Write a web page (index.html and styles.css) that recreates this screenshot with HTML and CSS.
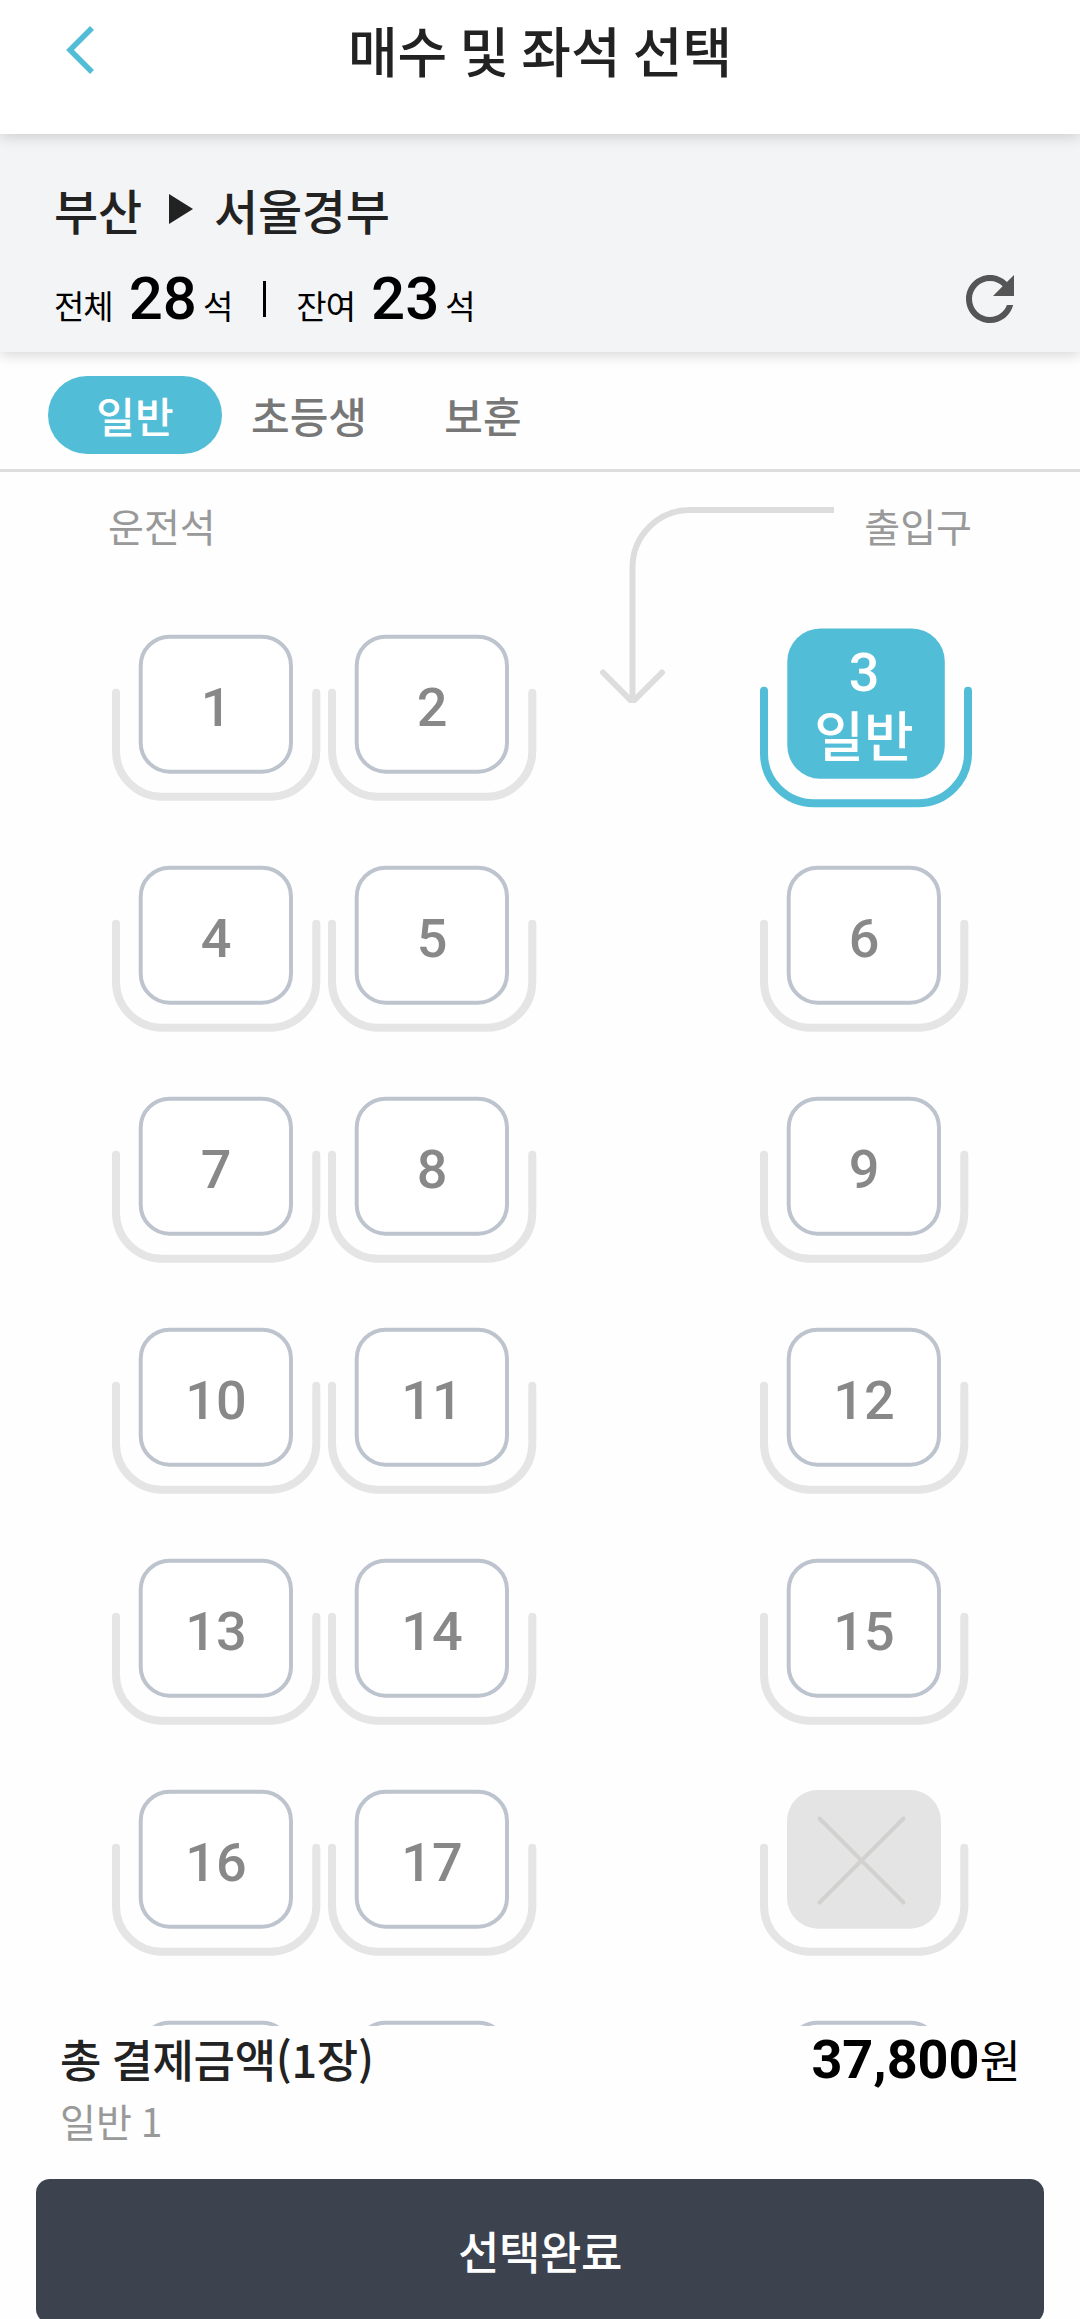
FILE: index.html
```html
<!DOCTYPE html>
<html lang="ko">
<head>
<meta charset="utf-8">
<title>매수 및 좌석 선택</title>
<link rel="stylesheet" href="styles.css">
</head>
<body>
<svg class="defs" aria-hidden="true">
  <symbol id="open" viewBox="0 0 216 231">
    <path d="M8 84.700V142.700a46 46 0 0 0 46 46H162.300a46 46 0 0 0 46-46V84.700" fill="none" stroke="#e5e5e5" stroke-width="8" stroke-linecap="round"/>
    <rect x="32.700" y="28.700" width="150.300" height="135" rx="29" fill="#fff" stroke="#bdc4ce" stroke-width="4"/>
  </symbol>
  <symbol id="taken" viewBox="0 0 216 231">
    <path d="M8 84.700V142.700a46 46 0 0 0 46 46H162.300a46 46 0 0 0 46-46V84.700" fill="none" stroke="#e5e5e5" stroke-width="8" stroke-linecap="round"/>
    <rect x="31" y="27" width="154" height="138.700" rx="31" fill="#e4e4e4"/>
    <path d="M63.500 55.500L147.500 139.500M147.500 55.500L63.500 139.500" fill="none" stroke="#d2d1d0" stroke-width="4" stroke-linecap="round"/>
  </symbol>
  <symbol id="picked" viewBox="0 0 216 231">
    <path d="M8 82.700V145.300a50 50 0 0 0 50 50H162a50 50 0 0 0 50-50V82.700" fill="none" stroke="#52bdd6" stroke-width="8" stroke-linecap="round"/>
    <rect x="31.300" y="20.500" width="157.500" height="150.200" rx="33" fill="#52bdd6"/>
  </symbol>
</svg>

<div class="screen">
  <header class="topbar">
    <svg class="back" width="28" height="48" viewBox="0 0 28 48"><path d="M26 2L4 24L26 46" fill="none" stroke="#52bdd6" stroke-width="5.500"/></svg>
    <h1 class="title">매수 및 좌석 선택</h1>
  </header>

  <section class="trip">
    <div class="route">
      <span>부산</span>
      <svg class="play" width="24" height="30" viewBox="0 0 24 30"><path d="M0 0L24 15L0 30Z" fill="#222"/></svg>
      <span>서울경부</span>
    </div>
    <div class="counts">
      <span class="unit">전체</span><b class="count">28</b><span class="unit">석</span>
      <i class="bar"></i>
      <span class="unit">잔여</span><b class="count">23</b><span class="unit">석</span>
      <svg class="refresh" width="72" height="72" viewBox="0 0 24 24"><path fill="#555" d="M17.650 6.350C16.200 4.900 14.210 4 12 4c-4.420 0-7.990 3.580-7.990 8s3.570 8 7.990 8c3.730 0 6.840-2.550 7.730-6h-2.080c-.820 2.330-3.040 4-5.650 4-3.310 0-6-2.690-6-6s2.690-6 6-6c1.660 0 3.140.690 4.220 1.780L13 11h7V4l-2.350 2.350z"/></svg>
    </div>
  </section>

  <nav class="tabs">
    <span class="tab active">일반</span>
    <span class="tab">초등생</span>
    <span class="tab">보훈</span>
  </nav>

  <main class="cabin">
    <div class="front">
      <span>운전석</span>
      <svg class="entry" width="240" height="200" viewBox="0 0 240 200"><g fill="none" stroke="#ddd" stroke-width="6"><path d="M236 7H92A57.500 57.500 0 0 0 34.500 64.500V198"/><path d="M5 169.500L34.500 199L64 169.500" stroke-linecap="round" stroke-linejoin="round"/></g></svg>
      <span>출입구</span>
    </div>
    <div class="seats">
      <div class="seat"><svg><use href="#open"/></svg><span>1</span></div>
      <div class="seat"><svg><use href="#open"/></svg><span>2</span></div>
      <div class="seat right picked"><svg><use href="#picked"/></svg><span>3<br>일반</span></div>
      <div class="seat"><svg><use href="#open"/></svg><span>4</span></div>
      <div class="seat"><svg><use href="#open"/></svg><span>5</span></div>
      <div class="seat right"><svg><use href="#open"/></svg><span>6</span></div>
      <div class="seat"><svg><use href="#open"/></svg><span>7</span></div>
      <div class="seat"><svg><use href="#open"/></svg><span>8</span></div>
      <div class="seat right"><svg><use href="#open"/></svg><span>9</span></div>
      <div class="seat"><svg><use href="#open"/></svg><span>10</span></div>
      <div class="seat"><svg><use href="#open"/></svg><span>11</span></div>
      <div class="seat right"><svg><use href="#open"/></svg><span>12</span></div>
      <div class="seat"><svg><use href="#open"/></svg><span>13</span></div>
      <div class="seat"><svg><use href="#open"/></svg><span>14</span></div>
      <div class="seat right"><svg><use href="#open"/></svg><span>15</span></div>
      <div class="seat"><svg><use href="#open"/></svg><span>16</span></div>
      <div class="seat"><svg><use href="#open"/></svg><span>17</span></div>
      <div class="seat right"><svg><use href="#taken"/></svg></div>
      <div class="seat"><svg><use href="#open"/></svg></div>
      <div class="seat"><svg><use href="#open"/></svg></div>
      <div class="seat right"><svg><use href="#open"/></svg></div>
    </div>
  </main>

  <footer class="pay">
    <div class="total">
      <span class="label">총 결제금액(1장)</span>
      <span class="price"><b>37,800</b>원</span>
    </div>
    <div class="detail">일반 1</div>
    <button class="done" type="button">선택완료</button>
  </footer>
</div>
</body>
</html>
```
FILE: styles.css
```css
* { box-sizing: border-box; }

html, body {
  margin: 0;
  height: 2319px;
  overflow: hidden;
}

body {
  background: #fefefe;
  color: #222;
  font-family: "Noto Sans CJK KR", sans-serif;
}

.defs { display: block; width: 0; height: 0; }

.screen {
  display: flex;
  flex-direction: column;
  width: 1080px;
  height: 2319px;
  overflow: hidden;
}

.topbar {
  display: grid;
  grid-template-columns: 66px 1fr 66px;
  flex: none;
  height: 134px;
  padding-top: 23px;
  background: #fff;
  box-shadow: 0 2px 14px rgba(0, 0, 0, .18);
  z-index: 2;
}

.back { grid-area: 1 / 2; margin-top: 3px; }

.title {
  grid-area: 1 / 2;
  margin: 0;
  font-size: 54px;
  font-weight: 500;
  line-height: 54px;
  word-spacing: -3px;
  text-align: center;
}

.trip {
  flex: none;
  height: 218px;
  padding: 50px 54px 0;
  background: #f3f4f6;
  box-shadow: 0 2px 14px rgba(0, 0, 0, .18);
  z-index: 1;
}

.route {
  display: flex;
  align-items: center;
  height: 50px;
  font-size: 48px;
  font-weight: 500;
  letter-spacing: -.2px;
}

.play { margin: 0 21px 0 27px; }

.counts {
  display: flex;
  align-items: baseline;
  height: 90px;
  margin-top: 20px;
  line-height: 90px;
  color: #000;
}

.unit { font-size: 33px; letter-spacing: -1px; }

.count {
  margin: 0 6px 0 16px;
  font: 500 60px/90px Roboto, sans-serif;
}

.bar {
  align-self: flex-start;
  width: 3px;
  height: 36px;
  margin: 27px 30px 0 31px;
  background: #000;
}

.refresh {
  align-self: flex-start;
  margin: 9px 0 0 auto;
}

.tabs {
  display: flex;
  flex: none;
  height: 120px;
  padding: 24px 48px 0;
  border-bottom: 3px solid #ddd;
}

.tab {
  width: 174px;
  height: 78px;
  border-radius: 39px;
  color: #777;
  font-size: 42px;
  font-weight: 500;
  line-height: 78px;
  text-align: center;
}

.tab.active {
  background: #52bdd6;
  color: #fff;
}

.cabin {
  flex: 1;
  min-height: 0;
  overflow: hidden;
}

.front {
  display: flex;
  justify-content: space-between;
  height: 136px;
  padding: 26px 108px 0;
  color: #999;
  font-size: 39px;
  line-height: 54px;
}

.entry { margin: 5px 26px 0 auto; flex: none; }

.seats {
  display: grid;
  grid-template-columns: repeat(4, 216px);
  grid-auto-rows: 231px;
  padding: 0 108px;
}

.seat {
  display: grid;
  color: #888;
  font: 500 54px/60px Roboto, "Noto Sans CJK KR", sans-serif;
  text-align: center;
}

.seat.right { grid-column: 4; }

.seat svg {
  grid-area: 1 / 1;
  width: 216px;
  height: 231px;
}

.seat span {
  grid-area: 1 / 1;
  padding-top: 70px;
}

.picked { color: #fff; }

.seat.picked span {
  padding-top: 32px;
  line-height: 66px;
}

.pay {
  flex: none;
  height: 293px;
  padding: 0 36px;
}

.total {
  display: flex;
  justify-content: space-between;
  align-items: baseline;
  height: 66px;
  padding: 0 23px 0 24px;
  line-height: 66px;
}

.label {
  font-size: 45px;
  font-weight: 500;
  letter-spacing: -.3px;
  word-spacing: -2px;
}

.price { color: #000; font-size: 45px; }
.price b { font: 700 54px/66px Roboto, sans-serif; }

.detail {
  height: 87px;
  padding-left: 24px;
  color: #999;
  font-size: 39px;
  line-height: 56px;
  word-spacing: -2px;
}

.done {
  display: block;
  width: 1008px;
  height: 144px;
  padding: 0;
  border: 0;
  border-radius: 14px;
  background: #3c424e;
  color: #fff;
  font: 500 45px/144px "Noto Sans CJK KR", sans-serif;
  letter-spacing: -.4px;
}
```
